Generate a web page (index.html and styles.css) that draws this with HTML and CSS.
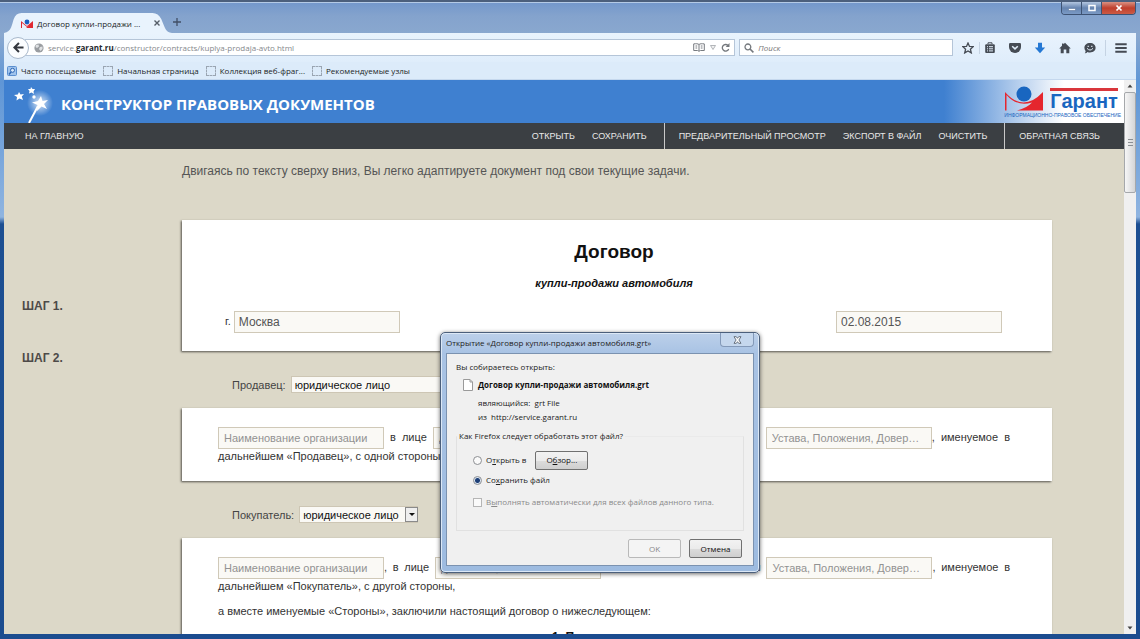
FILE: index.html
```html
<!DOCTYPE html>
<html lang="ru">
<head>
<meta charset="utf-8">
<title>Договор купли-продажи автомобиля</title>
<link rel="stylesheet" href="styles.css">
</head>
<body>
<div class="window">
  <header class="titlebar">
    <div class="tab">
      <svg class="tab-shape" viewBox="0 0 172 20" preserveAspectRatio="none" aria-hidden="true"><path d="M0 20C8 19 8 11 10 6Q12 0 18 0H152Q158 0 161 6C165 15 165 19 172 20Z" fill="#e9f3fd"/></svg>
      <svg class="favicon" viewBox="0 0 12 9" aria-hidden="true"><path d="M0 2L6 7L12 2V9H5L9 6L6 8L1 4V9H0Z" fill="#e02a33"/><circle cx="6" cy="3" r="2.4" fill="#1a5fc0"/></svg>
      <span class="tab-title">Договор купли-продажи ...</span>
      <button class="tab-close" aria-label="Закрыть вкладку"><svg viewBox="0 0 6 6"><path d="M.5 .5L5.500 5.500M5.500 .5L.5 5.500" stroke="#555d68" stroke-width="1.400"/></svg></button>
    </div>
    <button class="new-tab" aria-label="Новая вкладка"><svg viewBox="0 0 8 8"><path d="M4 0V8M0 4H8" stroke="#414f66" stroke-width="1.300"/></svg></button>
    <div class="controls">
      <button class="control" aria-label="Свернуть"><svg viewBox="0 0 10 8"><path d="M1.500 4.500H8.500V6.500H1.500Z" fill="#fff" stroke="#4b6690" stroke-width=".5"/></svg></button>
      <button class="control" aria-label="Развернуть"><svg viewBox="0 0 10 8"><rect x="2" y="1.500" width="6" height="5" fill="none" stroke="#fff" stroke-width="1.500"/></svg></button>
      <button class="control control-close" aria-label="Закрыть"><svg viewBox="0 0 10 8"><path d="M2.500 1.500L7.500 6.500M7.500 1.500L2.500 6.500" stroke="#fff" stroke-width="1.700"/></svg></button>
    </div>
  </header>

  <div class="navbar">
    <button class="back" aria-label="Назад"><svg viewBox="0 0 12 12"><path d="M6.500 1L1.500 6L6.500 11M2 6H11.500" fill="none" stroke="#33373e" stroke-width="2.200"/></svg></button>
    <div class="address">
      <svg class="globe" viewBox="0 0 10 10" aria-hidden="true"><circle cx="5" cy="5" r="4.600" fill="#9a9da1"/><path d="M2 2L4.500 1.500L5 3.500L3 5L1.500 4ZM6 4L8.500 3.500L8.500 6L6.500 8L5 6Z" fill="#dfe1e3"/></svg>
      <a class="url" href="#">service.<b>garant.ru</b>/constructor/contracts/kuplya-prodaja-avto.html</a>
      <svg class="icon-book" viewBox="0 0 12 9" aria-hidden="true"><path d="M6 1.500C5 .6 3 .6 .7 .9V7.500H4.500L6 8.300L7.500 7.500H11.300V.9C9 .6 7 .6 6 1.500ZM6 1.500V8M2.500 3H4.200M2.500 5H4.200M7.800 3H9.500M7.800 5H9.500" fill="none" stroke="#777b80"/></svg>
      <svg class="icon-drop" viewBox="0 0 6 5" aria-hidden="true"><path d="M.5 .5H5.500L3 4.500Z" fill="#f3f3f3" stroke="#a0a3a8" stroke-width=".8"/></svg>
      <svg class="icon-reload" viewBox="0 0 9 9" aria-hidden="true"><path d="M7 2.500A3.300 3.300 0 1 0 7.700 6" fill="none" stroke="#74787d" stroke-width="1.300"/><path d="M8.500 0V4H4.700Z" fill="#74787d"/></svg>
    </div>
    <label class="search">
      <svg viewBox="0 0 10 10" aria-hidden="true"><circle cx="3.900" cy="3.900" r="2.900" fill="none" stroke="#74787d" stroke-width="1.300"/><path d="M6 6L9.400 9.400" stroke="#74787d" stroke-width="1.600"/></svg>
      <input type="text" placeholder="Поиск" aria-label="Поиск">
    </label>
    <div class="tools">
      <button aria-label="Добавить в закладки"><svg viewBox="0 0 12 12"><path d="M6 1L7.500 4.400L11.200 4.700L8.400 7.200L9.300 10.900L6 8.900L2.700 10.900L3.600 7.200L.8 4.700L4.500 4.400Z" fill="none" stroke="#454b54" stroke-width="1.300"/></svg></button>
      <button class="ruled" aria-label="Закладки"><svg viewBox="0 0 12 12"><path d="M4 2V.8H8V2" fill="none" stroke="#454b54"/><rect x="1.200" y="2.300" width="9.600" height="8.800" rx="1" fill="#454b54"/><path d="M3 4.700H4M5 4.700H9M3 6.800H4M5 6.800H9M3 8.900H4M5 8.900H9" stroke="#e3effb"/></svg></button>
      <button aria-label="Pocket"><svg viewBox="0 0 12 12"><path d="M1.200 1H10.800Q12 1 12 2.200V5A6 6 0 0 1 0 5V2.200Q0 1 1.200 1Z" fill="#454b54"/><path d="M3.200 4.200L6 6.900L8.800 4.200" fill="none" stroke="#e3effb" stroke-width="1.500"/></svg></button>
      <button aria-label="Загрузки"><svg viewBox="0 0 12 12"><path d="M4 .8H8V5.500H11.200L6 11.300L.8 5.500H4Z" fill="#2478d4"/></svg></button>
      <button aria-label="Домой"><svg viewBox="0 0 12 12"><path d="M6 .8L11.800 6.500H10.300V11.200H7.300V7.500H4.700V11.200H1.700V6.500H.2L3 3.700V1.500H4.500V2.300Z" fill="#454b54"/></svg></button>
      <button aria-label="Чат"><svg viewBox="0 0 12 12"><path d="M6 1C9.300 1 11.600 3.100 11.600 5.800S9.300 10.500 6 10.500Q4.500 10.500 3.500 10Q2.500 11.300 .8 11.200Q1.700 10.200 1.600 8.900Q.4 7.700 .4 5.800C.4 3.100 2.700 1 6 1Z" fill="#454b54"/><path d="M3 6.300Q6 9.800 9 6.300M3.500 4.300H5M7 4.300H8.500" fill="none" stroke="#e3effb"/></svg></button>
      <button class="ruled menu" aria-label="Меню"><svg viewBox="0 0 12 12"><path d="M.3 2.200H11.700M.3 6H11.700M.3 9.800H11.700" stroke="#454b54" stroke-width="2"/></svg></button>
    </div>
  </div>

  <nav class="bookmarks">
    <a href="#"><svg viewBox="0 0 10 10" aria-hidden="true"><rect x=".5" y=".5" width="9" height="9" rx="1" fill="#9fc3ec" stroke="#5b8fd0"/><circle cx="5.500" cy="4.300" r="2" fill="#d9e9fa" stroke="#2d66b5"/><path d="M4 6L2 8.500" stroke="#2d66b5" stroke-width="1.400"/></svg>Часто посещаемые</a>
    <a href="#"><i class="blank"></i>Начальная страница</a>
    <a href="#"><i class="blank"></i>Коллекция веб-фраг...</a>
    <a href="#"><i class="blank"></i>Рекомендуемые узлы</a>
  </nav>

  <div class="viewport">
    <div class="page">
      <div class="banner">
        <svg class="wand" viewBox="0 0 48 40" aria-hidden="true">
          <defs><radialGradient id="glow"><stop offset="0" stop-color="#fff" stop-opacity=".8"/><stop offset="1" stop-color="#fff" stop-opacity="0"/></radialGradient></defs>
          <circle cx="27" cy="20" r="13" fill="url(#glow)"/>
          <path d="M25 23L16 40" stroke="#fff" stroke-width="2"/>
          <path d="M28 13L29.500 18L35 17L31 21L34 26L28.500 23.500L24 28L24.500 22L19 19.500L25 18Z" fill="#fff"/>
          <path d="M6 9L7.500 11.500L11 11L8.800 13.500L10 17L6.500 15.500L3.500 17.500L4 14L1 12L4.800 11.500Z" fill="#fff"/>
          <path d="M18 4L19.500 6L22 6L20.500 8.500L21 11L18.500 9.500L16 10.500L16.500 8L15 6L17.500 6Z" fill="#fff"/>
          <circle cx="21" cy="14" r="1.700" fill="#fff"/>
        </svg>
        <h1>КОНСТРУКТОР ПРАВОВЫХ ДОКУМЕНТОВ</h1>
        <a class="brand" href="#">
          <span class="brand-top">
            <svg viewBox="0 0 40 25" aria-hidden="true"><path d="M1 24.500V6Q19 27 39 6V24.500H13Q23 22 28 16.500Q13 21 2.500 9V24.500Z" fill="#e5262e"/><circle cx="20" cy="8" r="7.500" fill="#1966c0"/></svg>
            <span class="brand-name">Гарант</span>
          </span>
          <span class="brand-note">ИНФОРМАЦИОННО-ПРАВОВОЕ ОБЕСПЕЧЕНИЕ</span>
        </a>
      </div>
      <nav class="menubar">
        <a href="#">НА ГЛАВНУЮ</a>
        <div class="group push"><a href="#">ОТКРЫТЬ</a><a href="#">СОХРАНИТЬ</a></div>
        <div class="group"><a href="#">ПРЕДВАРИТЕЛЬНЫЙ ПРОСМОТР</a><a href="#">ЭКСПОРТ В ФАЙЛ</a><a href="#">ОЧИСТИТЬ</a></div>
        <div class="group last"><a href="#">ОБРАТНАЯ СВЯЗЬ</a></div>
      </nav>

      <main class="steps">
        <p class="intro">Двигаясь по тексту сверху вниз, Вы легко адаптируете документ под свои текущие задачи.</p>

        <div class="step step-first">ШАГ 1.</div>
        <section class="sheet sheet-title">
          <h2>Договор</h2>
          <p class="subtitle">купли-продажи автомобиля</p>
          <div class="place">
            <label>г. <input class="field" type="text" value="Москва"></label>
            <input class="field" type="text" value="02.08.2015" aria-label="Дата">
          </div>
        </section>

        <div class="step">ШАГ 2.</div>
        <div class="party">
          <label for="seller">Продавец:</label>
          <span class="pick pick-wide"><select id="seller"><option>юридическое лицо</option></select><span class="pick-arrow"></span></span>
        </div>
        <section class="sheet">
          <p class="clause"><input class="field hint" type="text" placeholder="Наименование организации" aria-label="Продавец"> в лице <input class="field hint" type="text" placeholder="должность, Ф.И.О." aria-label="Представитель продавца">, действующего на основании <input class="field hint" type="text" placeholder="Устава, Положения, Довер…" aria-label="Основание">, именуемое в дальнейшем «Продавец», с одной стороны,</p>
        </section>

        <div class="party">
          <label for="buyer">Покупатель:</label>
          <span class="pick"><select id="buyer"><option>юридическое лицо</option></select><span class="pick-arrow"></span></span>
        </div>
        <section class="sheet">
          <p class="clause"><input class="field hint" type="text" placeholder="Наименование организации" aria-label="Покупатель">, в лице <input class="field hint" type="text" placeholder="должность, Ф.И.О." aria-label="Представитель покупателя">, действующего на основании <input class="field hint" type="text" placeholder="Устава, Положения, Довер…" aria-label="Основание">, именуемое в дальнейшем «Покупатель», с другой стороны,</p>
          <p class="clause">а вместе именуемые «Стороны», заключили настоящий договор о нижеследующем:</p>
          <h3>1. Предмет договора</h3>
        </section>
      </main>
    </div>
    <div class="scrollbar" aria-hidden="true">
      <svg viewBox="0 0 11 12"><path d="M3 7.500H8L5.500 4.500Z" fill="#444"/></svg>
      <div class="thumb"><svg viewBox="0 0 5 7"><path d="M0 .5H5M0 3.500H5M0 6.500H5" stroke="#8b8f94"/></svg></div>
      <svg class="down" viewBox="0 0 11 12"><path d="M3 4.500H8L5.500 7.500Z" fill="#444"/></svg>
    </div>
  </div>
</div>

<div class="dialog" role="dialog" aria-labelledby="dialog-title">
  <div class="dialog-bar">
    <span id="dialog-title">Открытие «Договор купли-продажи автомобиля.grt»</span>
    <button class="dialog-close" aria-label="Закрыть окно"><svg viewBox="0 0 9 8"><path d="M1 .7H3.300L4.500 2.300L5.700 .7H8L5.900 4L8 7.300H5.700L4.500 5.700L3.300 7.300H1L3.100 4Z" fill="#fff" stroke="#4d5766" stroke-width=".8"/></svg></button>
  </div>
  <form class="dialog-body">
    <p>Вы собираетесь открыть:</p>
    <div class="file">
      <svg viewBox="0 0 10 12" aria-hidden="true"><path d="M.5 .5H7L9.500 3V11.500H.5Z" fill="#fff" stroke="#9a9a9a"/><path d="M7 .5V3H9.500" fill="none" stroke="#9a9a9a"/></svg>
      <b>Договор купли-продажи автомобиля.grt</b>
      <span class="detail">являющийся: &nbsp;grt File</span>
      <span class="detail">из &nbsp;http://service.garant.ru</span>
    </div>
    <fieldset>
      <legend>Как Firefox следует обработать этот файл?</legend>
      <div class="choice"><label><input type="radio" name="action"><span>О<u>т</u>крыть в</span></label><button type="button" class="btn">О<u>б</u>зор...</button></div>
      <div class="choice"><label><input type="radio" name="action" checked><span>Со<u>х</u>ранить файл</span></label></div>
      <div class="choice muted"><label><input type="checkbox" disabled><span>В<u>ы</u>полнять автоматически для всех файлов данного типа.</span></label></div>
    </fieldset>
    <div class="actions"><button type="button" class="btn" disabled>OK</button><button type="button" class="btn">Отмена</button></div>
  </form>
</div>
</body>
</html>
```

FILE: styles.css
```css
* { box-sizing: border-box; }
body { margin: 0; font-family: "Liberation Sans", Arial, sans-serif; font-size: 11px; color: #333; }
h1, h2, h3, p { margin: 0; }
a { color: inherit; text-decoration: none; }
button { padding: 0; border: 0; background: none; font: inherit; color: inherit; }
svg { display: block; flex: none; }

.window {
  height: 100vh;
  display: flex;
  flex-direction: column;
  padding: 0 4px 5px;
  overflow: hidden;
  background: linear-gradient(#7397cb 0, #84a3cd 14px, #8aa8cf 33px, #5f96d6 80px, #8fb4e0 215px, #1d4f92 222px, #1b4c8f 100%);
  border-top: 2px solid #4c5f7c;
  box-shadow: inset 0 1px #b4cae6;
}

.titlebar { display: flex; align-items: flex-end; flex: none; height: 31px; font: 8px "Open Sans", sans-serif; }
.tab { position: relative; display: flex; align-items: center; width: 168px; height: 20px; padding: 0 12px 0 17px; gap: 4px; color: #1b1f26; }
.tab-shape { position: absolute; inset: 0; width: 100%; height: 100%; }
.favicon { position: relative; width: 12px; height: 9px; }
.tab-title { position: relative; flex: 1; white-space: nowrap; }
.tab-close { position: relative; width: 6px; }
.new-tab { width: 8px; height: 8px; margin: 0 0 7px 1px; }
.controls { display: flex; align-self: flex-start; margin-left: auto; border: 1px solid #3e5373; border-top: 0; border-radius: 0 0 4px 4px; overflow: hidden; }
.control { display: grid; place-items: center; width: 20px; height: 12px; background: linear-gradient(#b3c6e0, #6684b0 50%, #7b9ac5); border-right: 1px solid #3e5373; }
.control svg { width: 10px; height: 8px; }
.control-close { width: 33px; border: 0; background: linear-gradient(#d99182, #bf3f2d 50%, #cc5a44); }

.navbar { display: flex; align-items: center; flex: none; height: 29px; padding: 0 9px 0 3px; background: linear-gradient(#e9f3fd, #dfedfb); font: 8px "Open Sans", sans-serif; }
.back { display: grid; place-items: center; flex: none; width: 22px; height: 22px; z-index: 1; border: 1px solid #a9b9cc; border-radius: 50%; background: #fbfdff; }
.back svg { width: 11px; height: 11px; }
.address { display: flex; align-items: center; flex: 718 1 0; height: 17px; margin-left: -4px; padding: 0 4px 0 8px; border: 1px solid #b5c5d8; background: #fff; }
.globe { width: 10px; height: 10px; margin-right: 4px; }
.url { flex: 1; color: #85888c; }
.url b { color: #23262b; }
.icon-book { width: 12px; height: 9px; }
.icon-drop { width: 6px; height: 5px; margin: 0 5px; }
.icon-reload { width: 9px; height: 9px; }
.search { display: flex; align-items: center; flex: 210 1 0; gap: 4px; height: 17px; margin-left: 4px; padding: 0 4px; border: 1px solid #b5c5d8; background: #fff; }
.search svg { width: 10px; height: 10px; }
.search input { width: 100%; min-width: 0; padding: 0; border: 0; outline: 0; background: none; font: italic 8px "Open Sans", sans-serif; }
.search input::placeholder { color: #777; }
.tools { display: flex; align-items: center; gap: 13px; margin-left: 9px; }
.tools button { width: 12px; }
.tools .ruled { box-sizing: content-box; margin-left: -8px; padding-left: 4px; border-left: 1px solid #c5d3e3; }
.tools .menu { margin-left: -4px; padding: 2px 0 2px 9px; }

.bookmarks { display: flex; align-items: center; flex: none; gap: 7px; height: 18px; padding: 0 3px; background: #dcebfa; border-bottom: 1px solid #c5d8ee; font: 8px "Open Sans", sans-serif; color: #1b1f26; }
.bookmarks a { display: flex; align-items: center; gap: 4px; white-space: nowrap; }
.bookmarks svg, .blank { width: 10px; height: 10px; }
.blank { border: 1px dashed #9aa5b2; }

.viewport { display: flex; flex: 1; min-height: 0; }
.page { flex: 1; min-width: 0; overflow: hidden; background: #dcd8c8; }

.banner { display: flex; align-items: center; height: 43px; padding: 0 3px 0 9px; background: linear-gradient(90deg, #3f80d0 calc(100% - 180px), #fff calc(100% - 60px)); }
.wand { width: 48px; height: 40px; align-self: flex-end; }
.banner h1 { flex: 1; font: bold 15px "Open Sans", sans-serif; color: #fff; padding-top: 4px; }
.brand { display: flex; flex-direction: column; gap: 1px; color: #1966c0; }
.brand-top { display: flex; align-items: flex-end; gap: 6px; }
.brand-top svg { width: 40px; height: 25px; }
.brand-name { border-top: 3px solid #d9363c; font-size: 20px; font-weight: bold; line-height: 20px; }
.brand-note { font-size: 5px; line-height: 6px; }

.menubar { display: flex; height: 26px; padding-left: 21px; background: #3b3f43; color: #e8e8e8; font-size: 9px; line-height: 26px; white-space: nowrap; }
.group { display: flex; gap: 17px; padding: 0 17px 0 14px; border-left: 1px solid #c9c9c9; }
.push { margin-left: auto; border: 0; }
.last { padding-right: 24px; }

.steps { display: grid; grid-template-columns: 160px 1fr; padding: 14px 72px 0 18px; }
.intro { grid-column: 2; height: 57px; font-size: 12px; line-height: 16px; color: #555; }
.step { grid-column: 1; height: 0; font-size: 12px; font-weight: bold; line-height: 14px; color: #4d4a48; }
.step-first { padding-top: 79px; }
.sheet { grid-column: 2; padding: 19px 42px 18px 36px; background: #fff; box-shadow: -1px 1px 2px #55534d; }
.sheet-title { text-align: center; }
.sheet h2 { font-size: 19px; line-height: 26px; color: #111; }
.subtitle { margin-top: 10px; font-weight: bold; font-style: italic; line-height: 16px; color: #111; }
.place { display: flex; justify-content: space-between; margin-top: 20px; padding: 0 8px 0 7px; }
.field { width: 166px; height: 22px; padding: 0 4px; border: 1px solid #d0c9b8; background: #faf9f5; font: inherit; color: #555; vertical-align: middle; }
.place .field { font-size: 12px; }
.hint { padding: 0 5px; }
.field::placeholder { color: #929292; }
.party { grid-column: 2; display: flex; align-items: center; gap: 5px; height: 57px; padding: 10px 0 0 50px; color: #444; }
.pick { position: relative; }
.pick select { display: block; width: 119px; height: 17px; padding: 0 0 0 3px; appearance: none; border: 1px solid #cdc6b4; border-radius: 0; background: #faf9f5; font: inherit; color: #111; }
.pick-wide select { width: 180px; }
.pick-arrow { position: absolute; top: 1px; right: 0; display: grid; place-items: center; width: 13px; height: 15px; border: 1px solid #8a8a8a; background: #eee; }
.pick-arrow::before { content: ""; border: 3px solid transparent; border-top-color: #111; border-bottom: 0; }
.clause { line-height: 14px; text-align: justify; }
.clause + .clause { margin-top: 11px; }
.sheet h3 { margin-top: 11px; font-size: 12px; line-height: 16px; text-align: center; color: #111; }

.scrollbar { display: flex; flex-direction: column; flex: none; width: 12px; background: #f0f0f0; }
.scrollbar svg { width: 12px; height: 12px; }
.thumb { display: grid; place-items: center; height: 101px; border: 1px solid #a5a8ab; border-radius: 2px; background: linear-gradient(90deg, #f6f6f6, #d4d5d7); }
.scrollbar .thumb svg { width: 5px; height: 7px; }
.scrollbar .down { margin-top: auto; }

.dialog {
  position: absolute;
  left: 440px;
  top: 332px;
  width: 320px;
  padding: 0 5px 6px;
  border: 1px solid #4b5f7b;
  border-radius: 5px;
  background: linear-gradient(#bcd0ea, #a9c3e4 20px, #9dbbe0);
  box-shadow: 0 1px 4px rgba(0, 0, 0, .6), inset 0 0 0 1px #dce8f6;
  font: 8px/12px "Open Sans", sans-serif;
  color: #222;
}
.dialog-bar { display: flex; align-items: center; height: 20px; }
.dialog-close { display: grid; place-items: center; align-self: flex-start; width: 34px; height: 14px; margin-left: auto; border: 1px solid #8399b8; border-top: 0; border-radius: 0 0 4px 4px; background: #c5d7ed; }
.dialog-close svg { width: 9px; height: 8px; }
.dialog-body { padding: 7px 9px 7px; border: 1px solid #7b92b0; background: #f0f0f0; }
.file { display: grid; grid-template-columns: 10px 1fr; column-gap: 5px; align-items: center; padding: 6px 0 0 7px; }
.file svg { width: 10px; height: 12px; }
.file b { color: #111; }
.detail { grid-column: 2; margin-top: 2px; }
.file b + .detail { margin-top: 6px; }
fieldset { margin: 7px 0 0; padding: 8px 16px 16px; border: 1px solid #e1e1e1; border-top-color: #eaeaea; min-width: 0; }
legend { margin-left: -16px; padding: 0 2px; }
.choice { display: flex; align-items: center; gap: 9px; height: 20px; }
.choice label { display: flex; align-items: center; gap: 4px; }
.choice input { appearance: none; flex: none; width: 9px; height: 9px; margin: 0; border: 1px solid #8d8f93; background: #fafafa; }
.choice input[type="radio"] { border-radius: 50%; }
.choice input:checked { background: radial-gradient(#1d3f77 2px, #dbe6f3 3px); }
.choice input:disabled { border-color: #b5b5b5; }
.muted { height: 24px; color: #8a8a8a; }
.btn { width: 53px; height: 19px; border: 1px solid #707070; border-radius: 2px; background: linear-gradient(#f2f2f2, #ebebeb 50%, #dcdcdc 51%, #cfcfcf); color: #111; }
.btn:disabled { border-color: #b9b9b9; background: #f4f4f4; color: #888; }
.actions { display: flex; justify-content: flex-end; gap: 8px; margin: 8px 2px 0 0; }
```
